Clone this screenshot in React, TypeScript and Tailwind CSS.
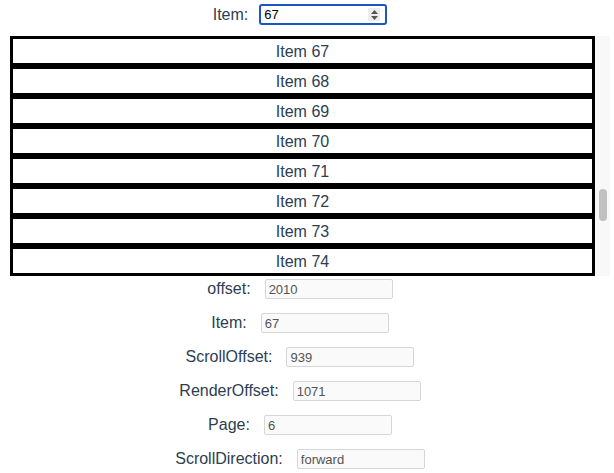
import React from 'react';

const items = [67, 68, 69, 70, 71, 72, 73, 74];

const fields: { label: string; value: string }[] = [
  { label: 'offset:', value: '2010' },
  { label: 'Item:', value: '67' },
  { label: 'ScrollOffset:', value: '939' },
  { label: 'RenderOffset:', value: '1071' },
  { label: 'Page:', value: '6' },
  { label: 'ScrollDirection:', value: 'forward' },
];

export default function App() {
  return (
    <div className="w-[614px] h-[473px] bg-white text-[#2c3e50] font-['Liberation_Sans',Arial,sans-serif] overflow-hidden">
      {/* item picker */}
      <div className="flex justify-center items-center h-[29px] pr-[14px]">
        <span className="text-[16px] mr-[11px]">Item:</span>
        <div className="w-[128px] h-[21px] border-2 border-[#1a55c9] rounded-[3px] flex items-center pl-[3px] pr-[5px]">
          <span className="flex-1 text-[13px] text-black leading-none">67</span>
          <div className="w-[12px] h-[13px] bg-[#ececec] flex flex-col items-center justify-center gap-[2px]">
            <svg width="7" height="4" viewBox="0 0 7 4">
              <path d="M3.5 0L7 4H0z" fill="#555" />
            </svg>
            <svg width="7" height="4" viewBox="0 0 7 4">
              <path d="M0 0h7L3.5 4z" fill="#555" />
            </svg>
          </div>
        </div>
      </div>

      {/* virtual list */}
      <div className="flex ml-[10px] mt-[7px] w-[600px] h-[240px]">
        <div className="w-[585px] flex flex-col">
          {items.map((n) => (
            <div
              key={n}
              className="h-[30px] border-[3px] border-black flex items-center justify-center pt-[2px] text-[16px]"
            >
              Item {n}
            </div>
          ))}
        </div>
        <div className="w-[15px] bg-[#f8f8f8] pt-[153px] pl-[4px]">
          <div className="w-[8px] h-[32px] rounded-full bg-[#c1c1c1]" />
        </div>
      </div>

      {/* state readout */}
      <div className="flex flex-col gap-[14px] mt-[3px]">
        {fields.map((f) => (
          <div key={f.label} className="flex justify-center items-center h-[20px] pr-[14px]">
            <span className="text-[16px] mr-[14px]">{f.label}</span>
            <input
              readOnly
              value={f.value}
              className="w-[128px] h-[20px] border border-[#d6d6d6] bg-[#fafafa] rounded-[2px] px-[3px] text-[13px] text-[#545454] outline-none"
            />
          </div>
        ))}
      </div>
    </div>
  );
}
